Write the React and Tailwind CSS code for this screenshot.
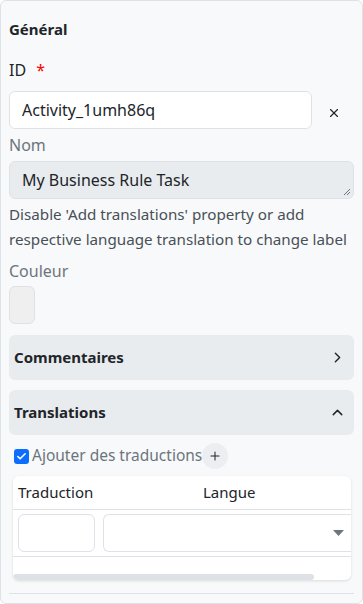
import React from 'react';
import { ChevronRight, ChevronUp, X, Plus, Check } from 'lucide-react';

const App = () => {
    return (
        <div className="w-[363px] h-[604px] bg-white font-['Noto_Sans',sans-serif] text-[#212529]">
            <div className="h-[604px] border border-[#dee2e6] rounded-md bg-[#f8f9fa] px-2 pt-[16px] overflow-hidden">
                <h2 className="text-[15px] font-bold leading-6">Général</h2>

                {/* ID */}
                <div className="mt-[17px] text-[16px] leading-6">
                    ID <span className="text-[#ff0000] ml-1.5">*</span>
                </div>
                <div className="flex items-center mt-[9px]">
                    <input
                        readOnly
                        value="Activity_1umh86q"
                        className="w-[303px] h-[38px] rounded-md border border-[#dee2e6] bg-white px-3 text-[16px] text-[#212529] outline-none"
                    />
                    <X className="w-[14px] h-[14px] ml-[15px] mt-[5px] text-[#212529]" strokeWidth={2} />
                </div>

                {/* Nom */}
                <div className="mt-[4px] text-[16px] leading-6 text-[#6c757d]">Nom</div>
                <div className="relative mt-[4px] w-[345px] h-[38px] rounded-md border border-[#dee2e6] bg-[#e9ecef] px-3 flex items-center text-[16px]">
                    My Business Rule Task
                    <svg className="absolute right-[2px] bottom-[2px]" width="8" height="8" viewBox="0 0 8 8">
                        <path d="M7 1 L1 7 M7 4 L4 7" stroke="#6c757d" strokeWidth="1" />
                    </svg>
                </div>
                <p className="mt-[3px] text-[15.2px] leading-[25px] text-[#495057]">
                    Disable 'Add translations' property or add respective language translation to change label
                </p>

                {/* Couleur */}
                <div className="mt-[7px] text-[16px] leading-6 text-[#6c757d]">Couleur</div>
                <div className="mt-[3px] w-[26px] h-[38px] rounded-md border border-[#dee2e6] bg-[#efefef]" />

                {/* Commentaires */}
                <div className="mt-[11px] w-[345px] h-[45px] rounded-md bg-[#e9ecef] flex items-center justify-between px-[5px]">
                    <span className="text-[15px] font-bold">Commentaires</span>
                    <ChevronRight className="w-[17px] h-[17px] mr-[3px]" strokeWidth={2} />
                </div>

                {/* Translations */}
                <div className="mt-[10px] w-[345px] h-[45px] rounded-md bg-[#e9ecef] flex items-center justify-between px-[5px]">
                    <span className="text-[15px] font-bold">Translations</span>
                    <ChevronUp className="w-[17px] h-[17px] mr-[3px]" strokeWidth={2} />
                </div>

                <div className="flex items-center mt-[8px] ml-[5px]">
                    <span className="w-[15px] h-[15px] rounded-[3px] bg-[#0d6efd] flex items-center justify-center">
                        <Check className="w-[11px] h-[11px] text-white" strokeWidth={3.5} />
                    </span>
                    <span className="ml-[3px] text-[15.5px] text-[#6c757d]">Ajouter des traductions</span>
                    <span className="w-[26px] h-[26px] rounded-full bg-[#eceef1] flex items-center justify-center">
                        <Plus className="w-[14px] h-[14px] text-[#212529]" strokeWidth={1.75} />
                    </span>
                </div>

                {/* Table */}
                <div className="mt-[7px] ml-[4px] w-[338px] rounded-md bg-white shadow-[0_1px_3px_rgba(0,0,0,0.12)] overflow-hidden">
                    <div className="flex h-[34px] items-center border-b border-[#dee2e6] text-[15px] text-[#212529]">
                        <span className="ml-[5px] w-[185px]">Traduction</span>
                        <span>Langue</span>
                    </div>
                    <div className="flex items-center h-[47px] border-b border-[#dee2e6] pl-[5px]">
                        <div className="w-[77px] shrink-0 h-[38px] rounded-md border border-[#dee2e6] bg-white" />
                        <div className="ml-[8px] w-[260px] shrink-0 h-[38px] rounded-l-md border border-[#dee2e6] border-r-0 bg-white flex items-center justify-end pr-[19px]">
                            <svg width="11" height="6" viewBox="0 0 11 6">
                                <path d="M0 0 L11 0 L5.5 6 Z" fill="#6c757d" />
                            </svg>
                        </div>
                    </div>
                    <div className="h-[23px] relative">
                        <div className="absolute left-0 bottom-0 w-[301px] h-[6px] rounded-full bg-[#dee2e6]" />
                    </div>
                </div>

                <div className="mt-[13px] border-t border-[#dee2e6]" />
            </div>
        </div>
    );
};

export default App;
